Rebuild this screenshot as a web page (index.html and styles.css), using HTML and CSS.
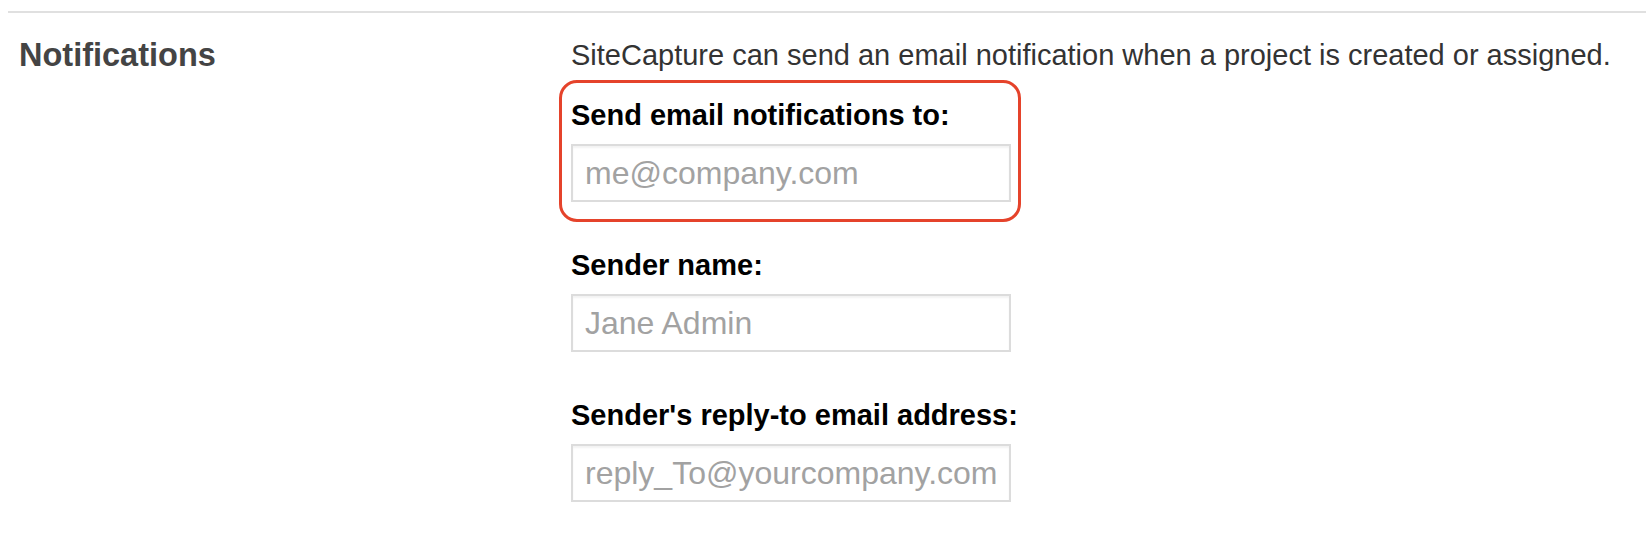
FILE: index.html
```html
<html>
<head>
  <title>Settings - Notifications</title>
  <link rel="stylesheet" href="styles.css">
</head>
<body>

<!-- Notifications settings block -->
<div class="settings-section">
  <h2 class="section-title">Notifications</h2>

  <div class="section-body">
    <p class="section-help">SiteCapture can send an email notification when a project is created or assigned.</p>

    <div class="field">
      <div class="highlight"></div>
      <label for="notifyTo">Send email notifications to:</label>
      <input type="text" id="notifyTo" placeholder="me@company.com">
    </div>

    <div class="field">
      <label for="senderName">Sender name:</label>
      <input type="text" id="senderName" placeholder="Jane Admin">
    </div>

    <div class="field">
      <label for="replyTo">Sender's reply-to email address:</label>
      <input type="text" id="replyTo" placeholder="reply_To@yourcompany.com">
    </div>
  </div>
</div>

</body>
</html>
```

FILE: styles.css
```css
body {
  margin: 0;
  padding: 0;
  background-color: white;
  font-family: "Liberation Sans", Arial, sans-serif;
}

.settings-section {
  display: flex;
  margin: 11px 0 0 8px;
  padding-top: 25px;
  border-top: 2px solid #e0e0e0;
}

.section-title {
  width: 552px;
  margin: 0;
  padding-left: 11px;
  font-size: 32.5px;
  line-height: 34px;
  font-weight: bold;
  color: #444;
}

.section-body {
  flex: 1;
}

.section-help {
  margin: 0 0 26px 0;
  font-size: 29px;
  line-height: 34px;
  color: #333;
}

.field {
  position: relative;
  width: 440px;
  margin-bottom: 46px;
}

.field label {
  display: block;
  margin-bottom: 12px;
  font-size: 29px;
  line-height: 34px;
  font-weight: bold;
  color: #000;
  white-space: nowrap;
}

.field input {
  display: block;
  box-sizing: border-box;
  width: 440px;
  height: 58px;
  margin: 0;
  padding: 0 12px;
  border: 2px solid #dcdcdc;
  border-radius: 0;
  box-shadow: inset 0 2px 2px rgba(0, 0, 0, 0.05);
  font-family: "Liberation Sans", Arial, sans-serif;
  font-size: 32px;
  color: #333;
}

.field input::placeholder {
  color: #a2a2a2;
}

/* red frame drawn round the first field */
.highlight {
  position: absolute;
  top: -18px;
  left: -12px;
  right: -10px;
  bottom: -20px;
  border: 3px solid #e5432b;
  border-radius: 18px;
  pointer-events: none;
}
```
